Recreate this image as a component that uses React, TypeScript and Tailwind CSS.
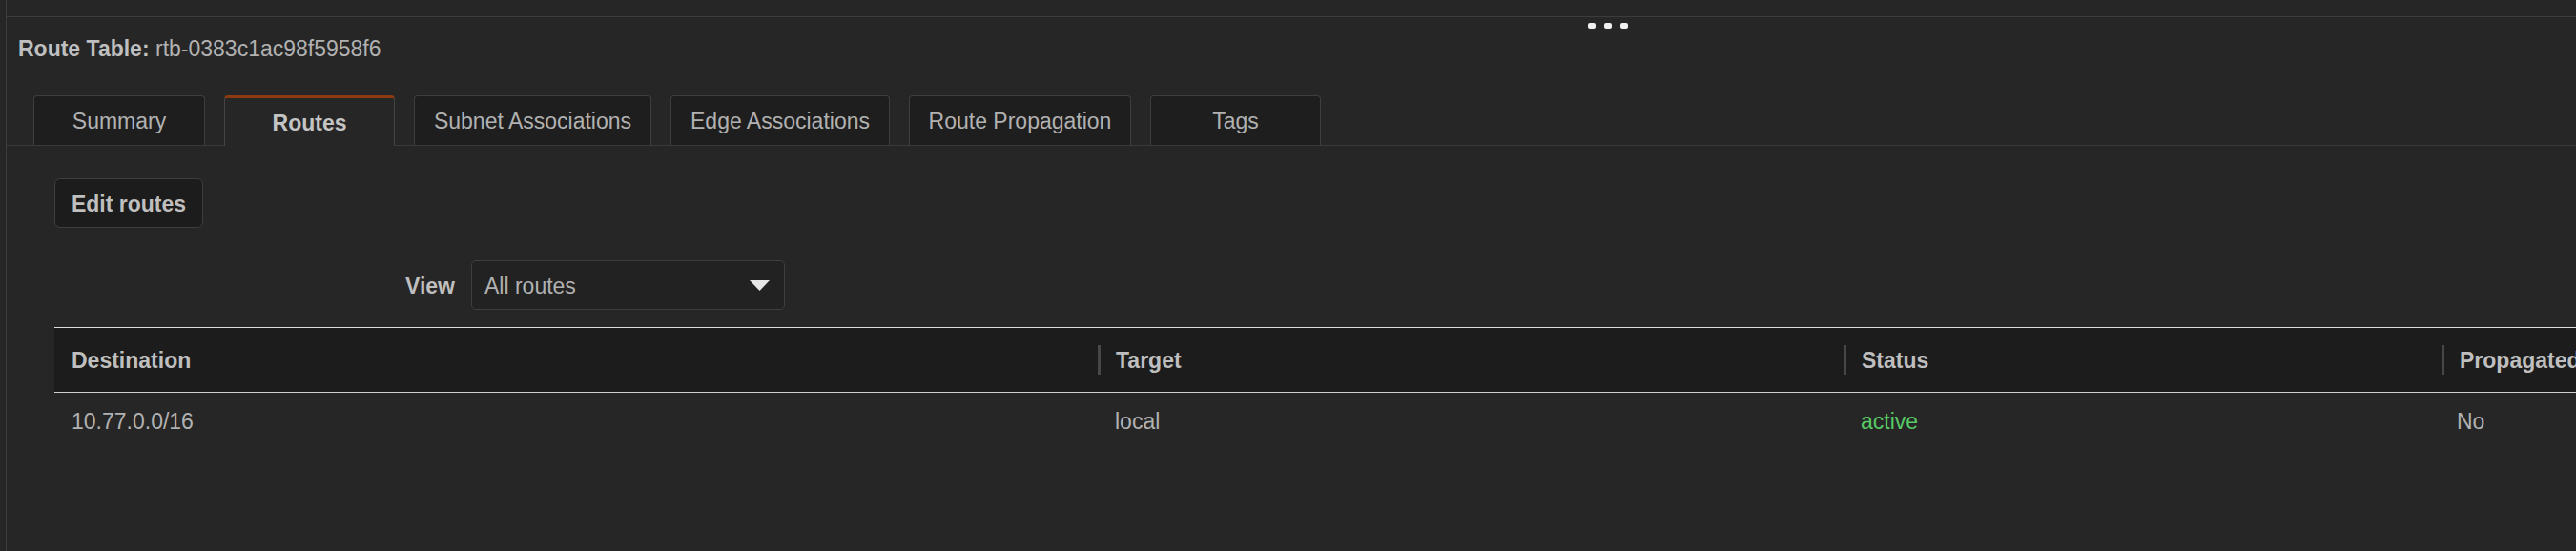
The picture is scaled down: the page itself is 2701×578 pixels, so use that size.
const tabs = [
  { label: 'Summary', w: 'w-[180px]' },
  { label: 'Routes', w: 'w-[179px]', active: true },
  { label: 'Subnet Associations', w: 'w-[249px]' },
  { label: 'Edge Associations', w: 'w-[230px]' },
  { label: 'Route Propagation', w: 'w-[233px]' },
  { label: 'Tags', w: 'w-[179px]' },
]

const columns = [
  { label: 'Destination', w: 'w-[1094px]' },
  { label: 'Target', w: 'w-[782px]' },
  { label: 'Status', w: 'w-[627px]' },
  { label: 'Propagated', w: 'w-[400px]' },
]

function App() {
  return (
    <div className="relative h-[578px] w-full overflow-hidden bg-[#262626] pl-[6px] font-['Liberation_Sans',Arial,sans-serif] text-[23px] text-[#b1b1b1]">
      {/* resize handle */}
      <div className="absolute left-[1665px] top-[24px] flex gap-[9px]">
        <span className="h-[6px] w-[8px] rounded-[2px] bg-[#f0f0f0]" />
        <span className="h-[6px] w-[8px] rounded-[2px] bg-[#f0f0f0]" />
        <span className="h-[6px] w-[8px] rounded-[2px] bg-[#f0f0f0]" />
      </div>

      <div className="h-full border-l border-[#3d3d3d]">
        <div className="h-[18px] border-b border-[#3d3d3d]" />

        <h2 className="mt-[22px] pl-[12px] leading-[23px]">
          <span className="font-bold text-[#bfbfbf]">Route Table:</span> rtb-0383c1ac98f5958f6
        </h2>

        <div className="mt-[37px] flex items-end gap-[20px] border-b border-[#3a3a3a] pl-[28px]">
          {tabs.map((t) =>
            t.active ? (
              <div
                key={t.label}
                className={`${t.w} relative z-10 -mb-px flex h-[53px] items-center justify-center rounded-t-[4px] border-x border-t-[3px] border-x-[#444444] border-t-[#8b3a12] bg-[#262626] pt-[2px] font-bold text-[#c4c4c4]`}
              >
                {t.label}
              </div>
            ) : (
              <div
                key={t.label}
                className={`${t.w} flex h-[52px] items-center justify-center rounded-t-[4px] border-x border-t border-[#3e3e3e] bg-[#1e1e1e] pt-[2px]`}
              >
                {t.label}
              </div>
            )
          )}
        </div>

        <div className="pl-[50px] pt-[34px]">
          <button className="flex h-[52px] w-[156px] items-center justify-center rounded-[6px] border border-[#3e3e3e] bg-[#1c1c1c] pt-[2px] font-bold text-[#bfbfbf]">
            Edit routes
          </button>

          <div className="mt-[34px] flex items-center pl-[368px]">
            <span className="pt-[2px] font-bold text-[#bfbfbf]">View</span>
            <div className="ml-[17px] flex h-[52px] w-[329px] items-center justify-between rounded-[5px] border border-[#3e3e3e] bg-[#222222] pl-[13px] pr-[15px]">
              <span className="pt-[2px]">All routes</span>
              <svg width="21" height="11" viewBox="0 0 21 11">
                <path d="M0 0H21L10.5 11Z" fill="#e6e6e6" />
              </svg>
            </div>
          </div>

          <div className="mt-[18px] w-max">
            <div className="flex h-[69px] border-y border-t-[#dcdcdc] border-b-[#cfcfcf] bg-[#1c1c1c] font-bold text-[#bfbfbf]">
              {columns.map((c, i) => (
                <div key={c.label} className={`${c.w} flex items-center ${i === 0 ? 'pl-[18px]' : ''}`}>
                  {i > 0 && <span className="h-[31px] w-[3px] bg-[#474747]" />}
                  <span className={i > 0 ? 'ml-[16px] pt-[2px]' : 'pt-[2px]'}>{c.label}</span>
                </div>
              ))}
            </div>
            <div className="flex h-[57px] items-center pt-[3px]">
              <div className="w-[1094px] pl-[18px]">10.77.0.0/16</div>
              <div className="w-[782px] pl-[18px]">local</div>
              <div className="w-[627px] pl-[18px] text-[#57c965]">active</div>
              <div className="w-[400px] pl-[16px]">No</div>
            </div>
          </div>
        </div>
      </div>
    </div>
  )
}

export default App
